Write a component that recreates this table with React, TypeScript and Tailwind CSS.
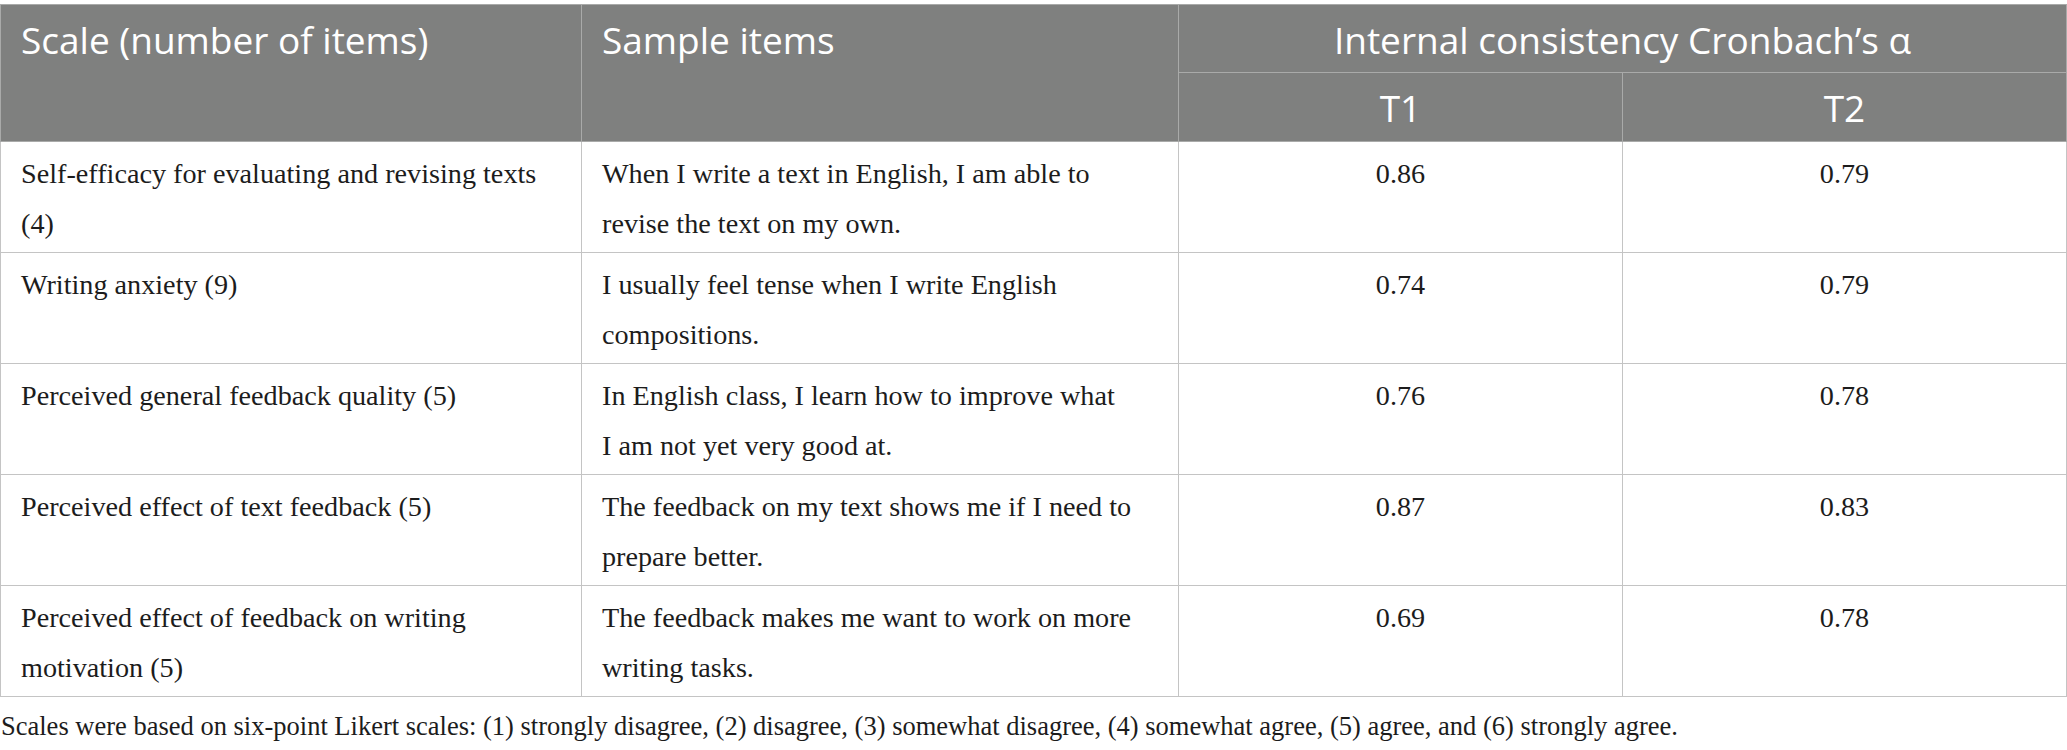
const rows = [
  {
    scale: ['Self-efficacy for evaluating and revising texts', '(4)'],
    sample: ['When I write a text in English, I am able to', 'revise the text on my own.'],
    t1: '0.86',
    t2: '0.79',
  },
  {
    scale: ['Writing anxiety (9)'],
    sample: ['I usually feel tense when I write English', 'compositions.'],
    t1: '0.74',
    t2: '0.79',
  },
  {
    scale: ['Perceived general feedback quality (5)'],
    sample: ['In English class, I learn how to improve what', 'I am not yet very good at.'],
    t1: '0.76',
    t2: '0.78',
  },
  {
    scale: ['Perceived effect of text feedback (5)'],
    sample: ['The feedback on my text shows me if I need to', 'prepare better.'],
    t1: '0.87',
    t2: '0.83',
  },
  {
    scale: ['Perceived effect of feedback on writing', 'motivation (5)'],
    sample: ['The feedback makes me want to work on more', 'writing tasks.'],
    t1: '0.69',
    t2: '0.78',
  },
];

function Lines({ lines }: { lines: string[] }) {
  return (
    <>
      {lines.map((l, i) => (
        <span key={i} className="block whitespace-nowrap">
          {l}
        </span>
      ))}
    </>
  );
}

export default function App() {
  const head = "border border-[#a9aaa9] px-[20px] pt-[10px] font-['Open_Sans',sans-serif] text-[37px] font-normal leading-[49px] text-white align-top whitespace-nowrap";
  const cell = "border border-[#c4c4c4] px-[20px] pt-[7px] pb-[3px] text-[28.2px] leading-[50px] align-top";

  return (
    <div className="w-[2067px] h-[750px] bg-white pt-[4px] font-['Liberation_Serif',serif] text-[#1c1c1c]">
      <table className="w-[2066px] table-fixed border-collapse border border-[#c4c4c4]">
        <colgroup>
          <col className="w-[581px]" />
          <col className="w-[597px]" />
          <col className="w-[444px]" />
          <col className="w-[444px]" />
        </colgroup>
        <thead className="bg-[#7f807f]">
          <tr>
            <th rowSpan={2} className={head + ' pb-[8px] text-left'}>
              Scale (number of items)
            </th>
            <th rowSpan={2} className={head + ' pb-[8px] text-left'}>
              Sample items
            </th>
            <th colSpan={2} className={head + ' pb-[8px] text-center'}>
              Internal consistency Cronbach’s α
            </th>
          </tr>
          <tr>
            <th className={head + ' pb-[9px] text-center'}>T1</th>
            <th className={head + ' pb-[9px] text-center'}>T2</th>
          </tr>
        </thead>
        <tbody>
          {rows.map((r, i) => (
            <tr key={i}>
              <td className={cell}>
                <Lines lines={r.scale} />
              </td>
              <td className={cell}>
                <Lines lines={r.sample} />
              </td>
              <td className={cell + ' text-center'}>{r.t1}</td>
              <td className={cell + ' text-center'}>{r.t2}</td>
            </tr>
          ))}
        </tbody>
      </table>
      <p className="mt-[12px] pl-[1px] text-[26.5px] leading-[34px] whitespace-nowrap">
        Scales were based on six-point Likert scales: (1) strongly disagree, (2) disagree, (3) somewhat disagree, (4) somewhat agree, (5) agree, and (6) strongly agree.
      </p>
    </div>
  );
}
